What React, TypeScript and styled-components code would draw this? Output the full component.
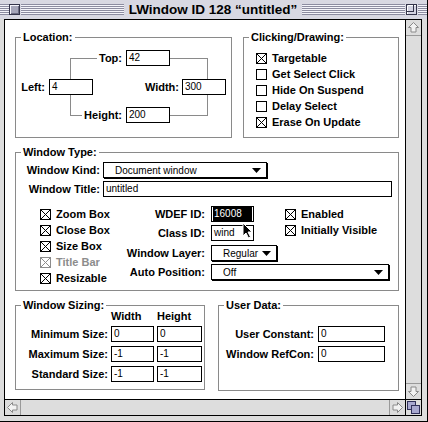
import styled, { createGlobalStyle } from 'styled-components';

const GlobalStyle = createGlobalStyle`
  html, body {
    margin: 0;
    padding: 0;
    background: #dddddd;
  }
  body {
    font-family: "Liberation Sans", Arial, sans-serif;
    color: #000;
  }
  * {
    box-sizing: border-box;
  }
`;

const Window = styled.div`
  width: 428px;
  height: 422px;
  display: flex;
  flex-direction: column;
  background: #dddddd;
  border-right: 1px solid #000;
  border-bottom: 1px solid #000;
`;

const TitleBar = styled.div`
  height: 19px;
  flex: none;
  display: flex;
  align-items: flex-start;
  padding-top: 4px;
  background: #d8d8e2;
`;

const Stripes = styled.div<{ $w?: number }>`
  height: 11px;
  flex: ${(p) => (p.$w ? `0 0 ${p.$w}px` : '1 1 0')};
  background: repeating-linear-gradient(to bottom, #8c8ca0 0 1px, #f4f4fa 1px 2px);
`;

const CloseBox = styled.div`
  width: 11px;
  height: 11px;
  flex: none;
  margin-right: 1px;
  border: 1px solid #34344a;
  background: #a6a6ba;
  box-shadow: inset 1px 1px 0 #f4f4fa, inset -1px -1px 0 #6c6c82;
`;

const ZoomBox = styled.div`
  width: 11px;
  height: 11px;
  flex: none;
  margin: 0 1px;
  display: flex;
`;

const Title = styled.div`
  flex: none;
  padding: 0 5px;
  font-size: 13.5px;
  font-weight: bold;
  line-height: 12px;
  white-space: nowrap;
`;

const Frame = styled.div`
  flex: 1;
  display: flex;
  padding: 0 5px 5px 4px;
`;

const Pane = styled.div`
  flex: 1;
  display: grid;
  grid-template-columns: 1fr 16px;
  grid-template-rows: 1fr 16px;
  border: 1px solid #000;
  background: #fff;
`;

const Content = styled.div`
  display: flex;
  flex-direction: column;
  gap: 14px;
  padding: 17px 6px 0 10px;
  overflow: hidden;
`;

const GroupRow = styled.div`
  display: flex;
  justify-content: space-between;
  align-items: flex-start;
`;

const Group = styled.div<{ $w: number; $h: number }>`
  position: relative;
  flex: none;
  width: ${(p) => p.$w}px;
  height: ${(p) => p.$h}px;
  border: 1px solid #8a8a8a;
`;

const Legend = styled.span`
  position: absolute;
  top: -7px;
  left: 5px;
  padding: 0 2px;
  background: #fff;
  font-size: 11px;
  font-weight: bold;
  line-height: 12px;
  white-space: nowrap;
`;

const Label = styled.span<{ $muted?: boolean }>`
  font-size: 11px;
  font-weight: bold;
  line-height: 16px;
  height: 16px;
  white-space: nowrap;
  color: ${(p) => (p.$muted ? '#8c8c8c' : '#000')};
`;

const Field = styled.div<{ $w?: number }>`
  width: ${(p) => (p.$w ? `${p.$w}px` : '100%')};
  height: 16px;
  border: 1px solid #000;
  background: #fff;
  padding-left: 2px;
  font-size: 10px;
  line-height: 14px;
  white-space: nowrap;
  overflow: hidden;
`;

const SelectedText = styled.span`
  display: block;
  height: 14px;
  margin: 0 1px 0 -1px;
  padding-left: 1px;
  background: #000;
  color: #fff;
`;

const Popup = styled.div<{ $w: number }>`
  width: ${(p) => p.$w}px;
  height: 16px;
  display: flex;
  align-items: center;
  justify-content: space-between;
  padding: 0 5px 0 11px;
  border: 1px solid #000;
  box-shadow: 1px 1px 0 #000;
  background: #fff;
  font-size: 10px;
  white-space: nowrap;
`;

/* Location diagram */
const LocationGrid = styled.div`
  display: grid;
  grid-template-columns: 33px 21px 23px 33px 44px 12px 26px 18px;
  grid-template-rows: 16px 13px 16px 12px 16px;
  padding-top: 12px;
`;

const Bracket = styled.div<{ $side: 'left' | 'right'; $area: string }>`
  grid-area: ${(p) => p.$area};
  margin: 8px 0 7px;
  border: 1px solid #8a8a8a;
  ${(p) => (p.$side === 'left' ? 'border-right: none;' : 'border-left: none;')}
`;

const GridLabel = styled(Label)<{ $area: string; $pr: number }>`
  grid-area: ${(p) => p.$area};
  justify-self: end;
  padding: 0 ${(p) => p.$pr}px 0 2px;
  background: #fff;
`;

const GridField = styled(Field)<{ $area: string }>`
  grid-area: ${(p) => p.$area};
`;

/* checkboxes */
const CheckList = styled.div<{ $pad?: string }>`
  display: flex;
  flex-direction: column;
  padding: ${(p) => p.$pad || '0'};
`;

const CheckRow = styled.div`
  height: 16px;
  display: flex;
  align-items: center;
  gap: 5px;
`;

/* window type */
const TypeBody = styled.div`
  display: flex;
  flex-direction: column;
  gap: 3px;
  padding-top: 9px;
`;

const FormRow = styled.div`
  display: flex;
  align-items: center;
  height: 16px;
`;

const FormLabel = styled(Label)`
  width: 87px;
  flex: none;
  padding-right: 3px;
  text-align: right;
`;

const LowerGrid = styled.div`
  display: grid;
  grid-template-columns: 102px 93px 74px 1fr;
  grid-template-rows: 19px 20px 19px 16px;
  margin-top: 9px;
  align-items: start;
`;

const LowerLabel = styled(Label)<{ $row: number }>`
  grid-column: 2;
  grid-row: ${(p) => p.$row};
  text-align: right;
  padding-right: 6px;
`;

const LowerCell = styled.div<{ $area: string }>`
  grid-area: ${(p) => p.$area};
  display: flex;
`;

const Cursor = styled.svg`
  position: absolute;
  left: 226px;
  top: 69px;
`;

/* sizing + user data */
const SizeGrid = styled.div`
  display: grid;
  grid-template-columns: 92px 43px 45px;
  grid-template-rows: 12px 16px 16px 16px;
  column-gap: 3px;
  row-gap: 4px;
  padding-top: 4px;
`;

const ColHead = styled.span`
  font-size: 11px;
  font-weight: bold;
  line-height: 12px;
  white-space: nowrap;
`;

const RightLabel = styled(Label)`
  text-align: right;
`;

const UserGrid = styled.div`
  display: grid;
  grid-template-columns: 95px 67px;
  grid-auto-rows: 16px;
  column-gap: 4px;
  row-gap: 4px;
  padding-top: 20px;
`;

/* scroll bars */
const VScroll = styled.div`
  display: flex;
  flex-direction: column;
  border-left: 1px solid #000;
  background: #dddddd;
`;

const HScroll = styled.div`
  display: flex;
  border-top: 1px solid #000;
  background: #dddddd;
`;

const ArrowBox = styled.div<{ $edge: 'top' | 'bottom' | 'left' | 'right' }>`
  width: 15px;
  height: 15px;
  flex: none;
  display: flex;
  align-items: center;
  justify-content: center;
  border-${(p) => p.$edge}: 1px solid #999;
  box-sizing: content-box;
`;

const Track = styled.div`
  flex: 1;
`;

const GrowBox = styled.div`
  border-left: 1px solid #000;
  border-top: 1px solid #000;
  background: #dddddd;
  display: flex;
  align-items: center;
  justify-content: center;
`;

function CheckBox({ checked, muted }: { checked?: boolean; muted?: boolean }) {
  const c = muted ? '#8c8c8c' : '#000';
  return (
    <svg width="11" height="11" viewBox="0 0 11 11" shapeRendering="crispEdges">
      <rect x="0.5" y="0.5" width="10" height="10" fill="#fff" stroke={c} />
      {checked && <path d="M1 1L10 10M10 1L1 10" stroke={c} />}
    </svg>
  );
}

function Check({ label, checked, muted }: { label: string; checked?: boolean; muted?: boolean }) {
  return (
    <CheckRow>
      <CheckBox checked={checked} muted={muted} />
      <Label $muted={muted}>{label}</Label>
    </CheckRow>
  );
}

function DownTriangle() {
  return (
    <svg width="9" height="5" viewBox="0 0 9 5">
      <path d="M0 0H9L4.5 5Z" fill="#000" />
    </svg>
  );
}

const arrowPaths = {
  up: '7.5,2.5 12.5,7.5 10,7.5 10,12 5,12 5,7.5 2.5,7.5',
  down: '7.5,12.5 12.5,7.5 10,7.5 10,3 5,3 5,7.5 2.5,7.5',
  left: '2.5,7.5 7.5,2.5 7.5,5 12,5 12,10 7.5,10 7.5,12.5',
  right: '12.5,7.5 7.5,2.5 7.5,5 3,5 3,10 7.5,10 7.5,12.5',
};

function ScrollArrow({ dir }: { dir: keyof typeof arrowPaths }) {
  return (
    <svg width="15" height="15" viewBox="0 0 15 15">
      <polygon points={arrowPaths[dir]} fill="#f2f2f2" stroke="#8a8a8a" strokeLinejoin="miter" />
    </svg>
  );
}

export default function App() {
  return (
    <>
      <GlobalStyle />
      <Window>
        <TitleBar>
          <Stripes $w={9} />
          <CloseBox />
          <Stripes />
          <Title>LWindow ID 128 “untitled”</Title>
          <Stripes />
          <ZoomBox>
            <svg width="11" height="11" viewBox="0 0 11 11" shapeRendering="crispEdges">
              <rect x="0.5" y="0.5" width="10" height="10" fill="#d4d4e2" stroke="#34344a" />
              <path d="M1.5 1.5H9.5M1.5 1.5V9.5" stroke="#fff" />
              <path d="M7.5 1V7.5H1" fill="none" stroke="#34344a" />
            </svg>
          </ZoomBox>
          <Stripes $w={9} />
        </TitleBar>

        <Frame>
          <Pane>
            <Content>
              <GroupRow>
                <Group $w={217} $h={101}>
                  <Legend>Location:</Legend>
                  <LocationGrid>
                    <Bracket $side="left" $area="1 / 3 / 6 / 5" />
                    <Bracket $side="right" $area="1 / 6 / 6 / 8" />
                    <GridLabel $area="1 / 3 / 2 / 5" $pr={4}>Top:</GridLabel>
                    <GridField $area="1 / 5 / 2 / 6">42</GridField>
                    <GridLabel $area="3 / 1 / 4 / 2" $pr={4}>Left:</GridLabel>
                    <GridField $area="3 / 2 / 4 / 4">4</GridField>
                    <GridLabel $area="3 / 5 / 4 / 7" $pr={3}>Width:</GridLabel>
                    <GridField $area="3 / 7 / 4 / 9">300</GridField>
                    <GridLabel $area="5 / 3 / 6 / 5" $pr={4}>Height:</GridLabel>
                    <GridField $area="5 / 5 / 6 / 6">200</GridField>
                  </LocationGrid>
                </Group>

                <Group $w={156} $h={101}>
                  <Legend>Clicking/Drawing:</Legend>
                  <CheckList $pad="12px 0 0 12px">
                    <Check label="Targetable" checked />
                    <Check label="Get Select Click" />
                    <Check label="Hide On Suspend" />
                    <Check label="Delay Select" />
                    <Check label="Erase On Update" checked />
                  </CheckList>
                </Group>
              </GroupRow>

              <Group $w={384} $h={139}>
                <Legend>Window Type:</Legend>
                <TypeBody>
                  <FormRow>
                    <FormLabel>Window Kind:</FormLabel>
                    <Popup $w={164}>
                      <span>Document window</span>
                      <DownTriangle />
                    </Popup>
                  </FormRow>
                  <FormRow>
                    <FormLabel>Window Title:</FormLabel>
                    <Field $w={289}>untitled</Field>
                  </FormRow>
                </TypeBody>
                <LowerGrid>
                  <LowerCell $area="1 / 1 / 5 / 2">
                    <CheckList $pad="0 0 0 24px">
                      <Check label="Zoom Box" checked />
                      <Check label="Close Box" checked />
                      <Check label="Size Box" checked />
                      <Check label="Title Bar" checked muted />
                      <Check label="Resizable" checked />
                    </CheckList>
                  </LowerCell>

                  <LowerLabel $row={1}>WDEF ID:</LowerLabel>
                  <LowerCell $area="1 / 3 / 2 / 4">
                    <Field $w={43}>
                      <SelectedText>16008</SelectedText>
                    </Field>
                  </LowerCell>

                  <LowerLabel $row={2}>Class ID:</LowerLabel>
                  <LowerCell $area="2 / 3 / 3 / 4">
                    <Field $w={43}>wind</Field>
                  </LowerCell>

                  <LowerLabel $row={3}>Window Layer:</LowerLabel>
                  <LowerCell $area="3 / 3 / 4 / 4">
                    <Popup $w={66}>
                      <span>Regular</span>
                      <DownTriangle />
                    </Popup>
                  </LowerCell>

                  <LowerLabel $row={4}>Auto Position:</LowerLabel>
                  <LowerCell $area="4 / 3 / 5 / 5">
                    <Popup $w={178}>
                      <span>Off</span>
                      <DownTriangle />
                    </Popup>
                  </LowerCell>

                  <LowerCell $area="1 / 4 / 3 / 5">
                    <CheckList>
                      <Check label="Enabled" checked />
                      <Check label="Initially Visible" checked />
                    </CheckList>
                  </LowerCell>
                </LowerGrid>
                <Cursor width="12" height="17" viewBox="0 0 12 17">
                  <path
                    d="M1 1V14L4 11L6.5 16L8.5 15L6 10H10Z"
                    fill="#000"
                    stroke="#fff"
                    strokeWidth="1"
                    strokeLinejoin="miter"
                  />
                </Cursor>
              </Group>

              <GroupRow>
                <Group $w={190} $h={85}>
                  <Legend>Window Sizing:</Legend>
                  <SizeGrid>
                    <span />
                    <ColHead>Width</ColHead>
                    <ColHead>Height</ColHead>
                    <RightLabel>Minimum Size:</RightLabel>
                    <Field>0</Field>
                    <Field>0</Field>
                    <RightLabel>Maximum Size:</RightLabel>
                    <Field>-1</Field>
                    <Field>-1</Field>
                    <RightLabel>Standard Size:</RightLabel>
                    <Field>-1</Field>
                    <Field>-1</Field>
                  </SizeGrid>
                </Group>

                <Group $w={181} $h={86}>
                  <Legend>User Data:</Legend>
                  <UserGrid>
                    <RightLabel>User Constant:</RightLabel>
                    <Field>0</Field>
                    <RightLabel>Window RefCon:</RightLabel>
                    <Field>0</Field>
                  </UserGrid>
                </Group>
              </GroupRow>
            </Content>

            <VScroll>
              <ArrowBox $edge="bottom">
                <ScrollArrow dir="up" />
              </ArrowBox>
              <Track />
              <ArrowBox $edge="top">
                <ScrollArrow dir="down" />
              </ArrowBox>
            </VScroll>

            <HScroll>
              <ArrowBox $edge="right">
                <ScrollArrow dir="left" />
              </ArrowBox>
              <Track />
              <ArrowBox $edge="left">
                <ScrollArrow dir="right" />
              </ArrowBox>
            </HScroll>

            <GrowBox>
              <svg width="13" height="13" viewBox="0 0 13 13" shapeRendering="crispEdges">
                <rect x="0.5" y="0.5" width="8" height="8" fill="#a8a8d0" stroke="#30305a" />
                <rect x="4.5" y="4.5" width="8" height="8" fill="#a8a8d0" stroke="#30305a" />
              </svg>
            </GrowBox>
          </Pane>
        </Frame>
      </Window>
    </>
  );
}
